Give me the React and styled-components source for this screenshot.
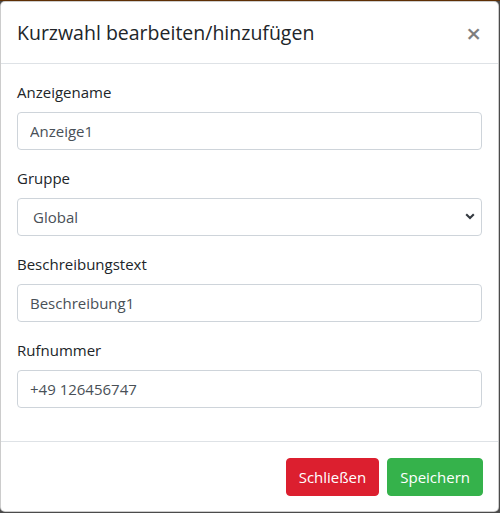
import styled, { createGlobalStyle } from "styled-components";

const GlobalStyle = createGlobalStyle`
  html, body {
    margin: 0;
    padding: 0;
    background: #4b4b4b;
  }
  * {
    box-sizing: border-box;
  }
`;

const Backdrop = styled.div`
  width: 500px;
  height: 513px;
  padding: 0 1px 1px 0;
  border-top: 1px solid #5e2f04;
  background: #4b4b4b;
  font-family: "Open Sans", "Noto Sans", sans-serif;
  color: #212529;
`;

const Modal = styled.div`
  display: flex;
  flex-direction: column;
  height: 100%;
  background: #fff;
  border: 1px solid rgba(0, 0, 0, 0.2);
  border-radius: 5px;
  overflow: hidden;
`;

const Header = styled.div`
  display: flex;
  align-items: flex-start;
  justify-content: space-between;
  padding: 16px 16px 15px;
  border-bottom: 1px solid #dee2e6;
`;

const Title = styled.h5`
  margin: 0;
  font-size: 19.5px;
  font-weight: 500;
  line-height: 30px;
`;

const Close = styled.button`
  background: none;
  border: 0;
  padding: 0;
  margin: 0 1px 0 0;
  color: #000;
  opacity: 0.5;
  font-size: 26px;
  font-weight: 600;
  line-height: 30px;
  font-family: inherit;
  cursor: pointer;
`;

const Body = styled.div`
  flex: 1;
  padding: 16px 16px 0;
`;

const Group = styled.div`
  margin-bottom: 16px;
`;

const Label = styled.label`
  display: block;
  margin-bottom: 8px;
  font-size: 15px;
  line-height: 24px;
`;

const Input = styled.input`
  display: block;
  width: 100%;
  height: 38px;
  padding: 6px 12px;
  font-family: inherit;
  font-size: 15px;
  color: #495057;
  background: #fff;
  border: 1px solid #ced4da;
  border-radius: 4px;
  outline: none;
`;

const SelectWrap = styled.div`
  position: relative;
`;

const Select = styled.select`
  display: block;
  width: 100%;
  height: 38px;
  padding: 6px 36px 6px 15px;
  font-family: inherit;
  font-size: 15px;
  color: #495057;
  background: #fff;
  border: 1px solid #ced4da;
  border-radius: 4px;
  appearance: none;
  outline: none;
`;

const Chevron = styled.svg`
  position: absolute;
  right: 7px;
  top: 15px;
  pointer-events: none;
`;

const Footer = styled.div`
  display: flex;
  justify-content: flex-end;
  gap: 8px;
  padding: 16px 15px 15px;
  border-top: 1px solid #dee2e6;
`;

const Button = styled.button`
  height: 38px;
  padding: 0 12px;
  font-family: inherit;
  font-size: 15px;
  color: #fff;
  background: ${(p) => (p.$variant === "danger" ? "#dc1f2f" : "#35b24b")};
  border: 1px solid ${(p) => (p.$variant === "danger" ? "#dc1f2f" : "#35b24b")};
  border-radius: 4px;
  cursor: pointer;
`;

export default function App() {
  return (
    <>
      <GlobalStyle />
      <Backdrop>
        <Modal>
          <Header>
            <Title>Kurzwahl bearbeiten/hinzufügen</Title>
            <Close aria-label="Close">×</Close>
          </Header>
          <Body>
            <Group>
              <Label>Anzeigename</Label>
              <Input defaultValue="Anzeige1" />
            </Group>
            <Group>
              <Label>Gruppe</Label>
              <SelectWrap>
                <Select defaultValue="global">
                  <option value="global">Global</option>
                </Select>
                <Chevron width="10" height="7" viewBox="0 0 10 7">
                  <path d="M1.2 1.3 L5 5 L8.8 1.3" stroke="#343a40" strokeWidth="2.1" fill="none" />
                </Chevron>
              </SelectWrap>
            </Group>
            <Group>
              <Label>Beschreibungstext</Label>
              <Input defaultValue="Beschreibung1" />
            </Group>
            <Group>
              <Label>Rufnummer</Label>
              <Input defaultValue="+49 126456747" />
            </Group>
          </Body>
          <Footer>
            <Button $variant="danger">Schließen</Button>
            <Button $variant="success">Speichern</Button>
          </Footer>
        </Modal>
      </Backdrop>
    </>
  );
}
